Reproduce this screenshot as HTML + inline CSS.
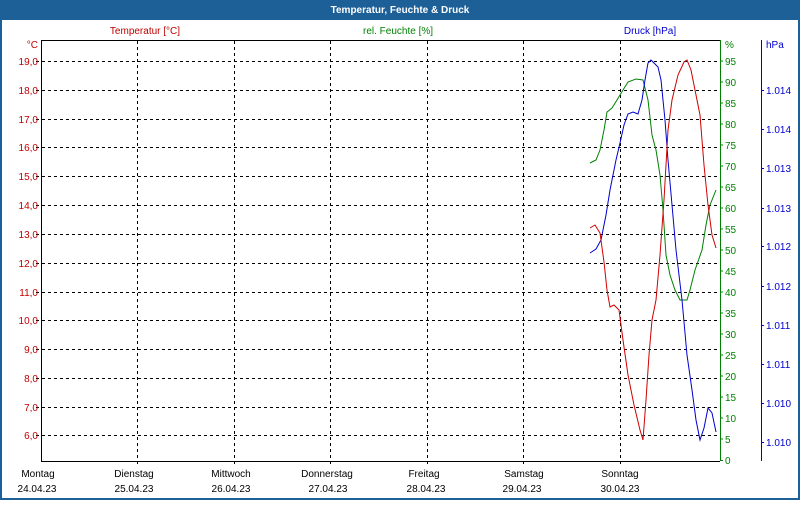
<!DOCTYPE html>
<html><head><meta charset="utf-8"><style>
body{margin:0;width:800px;height:500px;overflow:hidden;background:#fff;font-family:"Liberation Sans",sans-serif}
svg text{font-family:"Liberation Sans",sans-serif;font-size:10px}
</style></head><body>
<svg width="800" height="500" xmlns="http://www.w3.org/2000/svg">
<rect x="0" y="0" width="800" height="500" fill="#1d5f97"/>
<rect x="2" y="20" width="796" height="478" fill="#fff"/>
<text x="400" y="13" text-anchor="middle" fill="#fff" font-weight="bold" style="font-size:10px">Temperatur, Feuchte &amp; Druck</text>
<text x="145" y="34" text-anchor="middle" fill="#c00000">Temperatur [°C]</text>
<text x="398" y="34" text-anchor="middle" fill="#008000">rel. Feuchte [%]</text>
<text x="650" y="34" text-anchor="middle" fill="#0000d0">Druck [hPa]</text>
<g stroke="#000" stroke-dasharray="3,3" stroke-width="1">
<line x1="137.5" y1="41" x2="137.5" y2="466"/><line x1="234.5" y1="41" x2="234.5" y2="466"/>
<line x1="330.5" y1="41" x2="330.5" y2="466"/><line x1="427.5" y1="41" x2="427.5" y2="466"/>
<line x1="523.5" y1="41" x2="523.5" y2="466"/><line x1="620.5" y1="41" x2="620.5" y2="466"/>
<line x1="36" y1="61.5" x2="720" y2="61.5"/><line x1="36" y1="90.5" x2="720" y2="90.5"/>
<line x1="36" y1="119.5" x2="720" y2="119.5"/><line x1="36" y1="147.5" x2="720" y2="147.5"/>
<line x1="36" y1="176.5" x2="720" y2="176.5"/><line x1="36" y1="205.5" x2="720" y2="205.5"/>
<line x1="36" y1="234.5" x2="720" y2="234.5"/><line x1="36" y1="263.5" x2="720" y2="263.5"/>
<line x1="36" y1="292.5" x2="720" y2="292.5"/><line x1="36" y1="320.5" x2="720" y2="320.5"/>
<line x1="36" y1="349.5" x2="720" y2="349.5"/><line x1="36" y1="378.5" x2="720" y2="378.5"/>
<line x1="36" y1="407.5" x2="720" y2="407.5"/><line x1="36" y1="435.5" x2="720" y2="435.5"/>
</g>
<path d="M41.5 40.5H720.5M41.5 40V461.5H720" stroke="#000" fill="none"/>
<path d="M720.5 40V461" stroke="#008000" fill="none"/>
<path d="M761.5 40V461" stroke="#0000d0" fill="none"/>
<g fill="#c00000" text-anchor="end">
<text x="38" y="48">°C</text>
<text x="38" y="65">19,0</text><text x="38" y="94">18,0</text><text x="38" y="123">17,0</text><text x="38" y="151">16,0</text>
<text x="38" y="180">15,0</text><text x="38" y="209">14,0</text><text x="38" y="238">13,0</text><text x="38" y="267">12,0</text>
<text x="38" y="296">11,0</text><text x="38" y="324">10,0</text><text x="38" y="353">9,0</text><text x="38" y="382">8,0</text>
<text x="38" y="411">7,0</text><text x="38" y="439">6,0</text>
</g>
<g fill="#008000">
<text x="725" y="48">%</text>
<text x="725" y="65">95</text><text x="725" y="86">90</text><text x="725" y="107">85</text><text x="725" y="128">80</text>
<text x="725" y="149">75</text><text x="725" y="170">70</text><text x="725" y="191">65</text><text x="725" y="212">60</text>
<text x="725" y="233">55</text><text x="725" y="254">50</text><text x="725" y="275">45</text><text x="725" y="296">40</text>
<text x="725" y="317">35</text><text x="725" y="338">30</text><text x="725" y="359">25</text><text x="725" y="380">20</text>
<text x="725" y="401">15</text><text x="725" y="422">10</text><text x="725" y="443">5</text><text x="725" y="464">0</text>
</g>
<g stroke="#008000"><path d="M720 61h3M720 82h3M720 103h3M720 124h3M720 145h3M720 166h3M720 187h3M720 208h3M720 229h3M720 250h3M720 271h3M720 292h3M720 313h3M720 334h3M720 355h3M720 376h3M720 397h3M720 418h3M720 439h3M720 460.5h3"/></g>
<g stroke="#0000d0"><path d="M761 90.5h3M761 129.5h3M761 168.5h3M761 208.5h3M761 246.5h3M761 286.5h3M761 325.5h3M761 364.5h3M761 403.5h3M761 442.5h3"/></g>
<g fill="#0000d0">
<text x="766" y="48">hPa</text>
<text x="766" y="94">1.014</text><text x="766" y="133">1.014</text><text x="766" y="172">1.013</text><text x="766" y="212">1.013</text>
<text x="766" y="250">1.012</text><text x="766" y="290">1.012</text><text x="766" y="329">1.011</text><text x="766" y="368">1.011</text>
<text x="766" y="407">1.010</text><text x="766" y="446">1.010</text>
</g>
<g fill="#000" text-anchor="middle">
<text x="38" y="477">Montag</text><text x="37" y="492">24.04.23</text>
<text x="134" y="477">Dienstag</text><text x="134" y="492">25.04.23</text>
<text x="231" y="477">Mittwoch</text><text x="231" y="492">26.04.23</text>
<text x="327" y="477">Donnerstag</text><text x="328" y="492">27.04.23</text>
<text x="424" y="477">Freitag</text><text x="426" y="492">28.04.23</text>
<text x="524" y="477">Samstag</text><text x="522" y="492">29.04.23</text>
<text x="620" y="477">Sonntag</text><text x="620" y="492">30.04.23</text>
</g>
<polyline fill="none" stroke="#008000" points="590,163 596,160 600,150 604,130 607,112 612,108 617,100 623,90 628,82 636,79 643,80 648,100 652,135 656,150 660,175 663,210 666,255 670,275 675,290 680,300 687,300 690,290 695,270 702,250 706,225 710,205 716,190"/>
<polyline fill="none" stroke="#0000d0" points="590,253 596,249 601,240 606,215 610,190 616,160 620,143 624,125 628,114 633,112 638,114 642,100 645,80 648,63 651,60 658,67 661,80 665,120 668,160 672,205 676,250 682,300 687,355 692,390 696,420 700,440 704,428 708,408 712,413 716,432"/>
<polyline fill="none" stroke="#d00000" points="590,228 595,225 600,233 604,262 607,290 610,307 614,305 619,310 623,340 628,375 634,405 640,430 643,440 646,400 649,355 652,320 656,300 660,255 664,200 668,130 672,100 678,75 684,62 687,60 691,70 696,95 700,115 704,165 708,205 712,235 716,248"/>
</svg>
</body></html>
